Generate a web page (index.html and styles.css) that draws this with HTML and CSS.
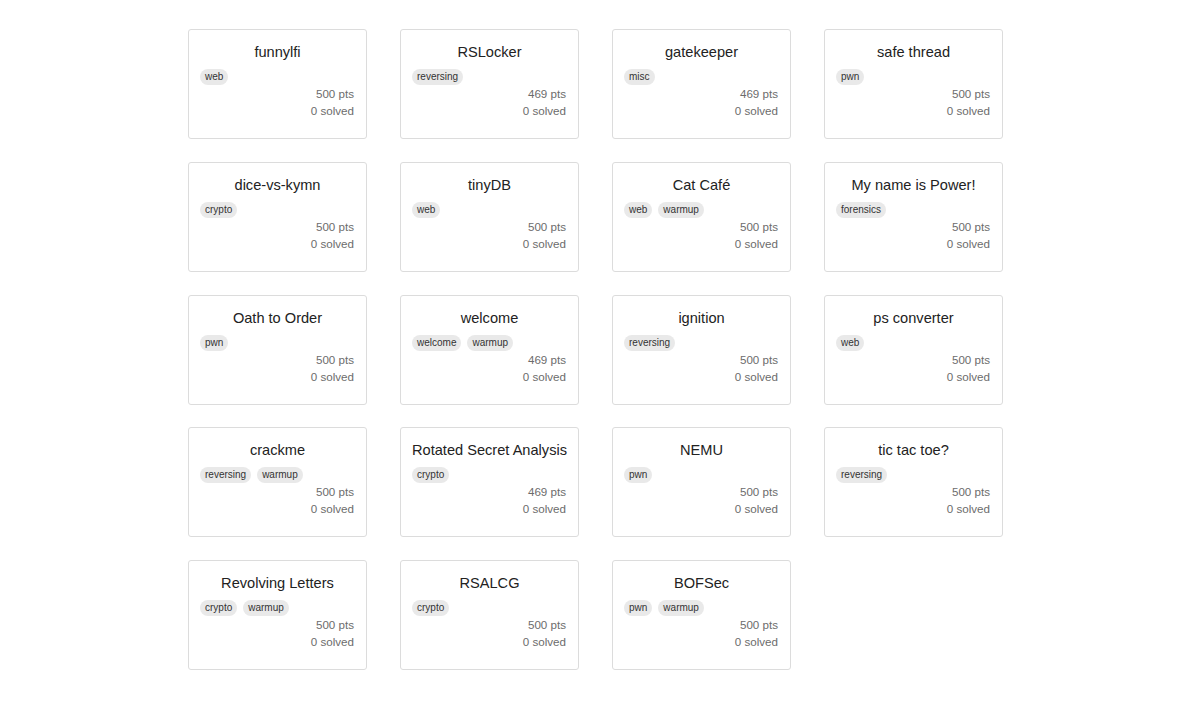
FILE: index.html
```html
<!DOCTYPE html>
<html lang="en">
<head>
    <meta charset="UTF-8">
    <title>Challenges</title>
    <link rel="stylesheet" href="styles.css">
</head>
<body>
    <div class="board">
        <div class="card"><h3>funnylfi</h3><div class="tags"><span class="tag">web</span></div><div class="score">500 pts</div><div class="score">0 solved</div></div>
        <div class="card"><h3>RSLocker</h3><div class="tags"><span class="tag">reversing</span></div><div class="score">469 pts</div><div class="score">0 solved</div></div>
        <div class="card"><h3>gatekeeper</h3><div class="tags"><span class="tag">misc</span></div><div class="score">469 pts</div><div class="score">0 solved</div></div>
        <div class="card"><h3>safe thread</h3><div class="tags"><span class="tag">pwn</span></div><div class="score">500 pts</div><div class="score">0 solved</div></div>

        <div class="card"><h3>dice-vs-kymn</h3><div class="tags"><span class="tag">crypto</span></div><div class="score">500 pts</div><div class="score">0 solved</div></div>
        <div class="card"><h3>tinyDB</h3><div class="tags"><span class="tag">web</span></div><div class="score">500 pts</div><div class="score">0 solved</div></div>
        <div class="card"><h3>Cat Café</h3><div class="tags"><span class="tag">web</span><span class="tag">warmup</span></div><div class="score">500 pts</div><div class="score">0 solved</div></div>
        <div class="card"><h3>My name is Power!</h3><div class="tags"><span class="tag">forensics</span></div><div class="score">500 pts</div><div class="score">0 solved</div></div>

        <div class="card"><h3>Oath to Order</h3><div class="tags"><span class="tag">pwn</span></div><div class="score">500 pts</div><div class="score">0 solved</div></div>
        <div class="card"><h3>welcome</h3><div class="tags"><span class="tag">welcome</span><span class="tag">warmup</span></div><div class="score">469 pts</div><div class="score">0 solved</div></div>
        <div class="card"><h3>ignition</h3><div class="tags"><span class="tag">reversing</span></div><div class="score">500 pts</div><div class="score">0 solved</div></div>
        <div class="card"><h3>ps converter</h3><div class="tags"><span class="tag">web</span></div><div class="score">500 pts</div><div class="score">0 solved</div></div>

        <div class="card"><h3>crackme</h3><div class="tags"><span class="tag">reversing</span><span class="tag">warmup</span></div><div class="score">500 pts</div><div class="score">0 solved</div></div>
        <div class="card"><h3>Rotated Secret Analysis</h3><div class="tags"><span class="tag">crypto</span></div><div class="score">469 pts</div><div class="score">0 solved</div></div>
        <div class="card"><h3>NEMU</h3><div class="tags"><span class="tag">pwn</span></div><div class="score">500 pts</div><div class="score">0 solved</div></div>
        <div class="card"><h3>tic tac toe?</h3><div class="tags"><span class="tag">reversing</span></div><div class="score">500 pts</div><div class="score">0 solved</div></div>

        <div class="card"><h3>Revolving Letters</h3><div class="tags"><span class="tag">crypto</span><span class="tag">warmup</span></div><div class="score">500 pts</div><div class="score">0 solved</div></div>
        <div class="card"><h3>RSALCG</h3><div class="tags"><span class="tag">crypto</span></div><div class="score">500 pts</div><div class="score">0 solved</div></div>
        <div class="card"><h3>BOFSec</h3><div class="tags"><span class="tag">pwn</span><span class="tag">warmup</span></div><div class="score">500 pts</div><div class="score">0 solved</div></div>
    </div>
</body>
</html>
```

FILE: styles.css
```css
body {
    margin: 0;
    font-family: "Liberation Sans", Arial, sans-serif;
    color: #212529;
    background: #fff;
}

/* challenge grid */
.board {
    display: grid;
    grid-template-columns: repeat(4, 179px);
    column-gap: 33px;
    row-gap: 22.75px;
    padding: 29px 0 0 188px;
}

.card {
    box-sizing: border-box;
    height: 110px;
    border: 1px solid #dcdcdc;
    border-radius: 3px;
    padding: 11px 11px 0 11px;
}

.card h3 {
    margin: 0;
    font-size: 14.6px;
    font-weight: normal;
    line-height: 22px;
    text-align: center;
    white-space: nowrap;
    color: #222;
}

.tags {
    display: flex;
    gap: 6px;
    margin-top: 6px;
    height: 16px;
}

.tag {
    background: #e9e9e9;
    border-radius: 8px;
    padding: 0 5px;
    font-size: 10px;
    line-height: 16px;
    color: #333;
}

.score {
    text-align: right;
    font-size: 11.6px;
    line-height: 17px;
    color: #6c6c6c;
    padding-right: 1px;
}
```
